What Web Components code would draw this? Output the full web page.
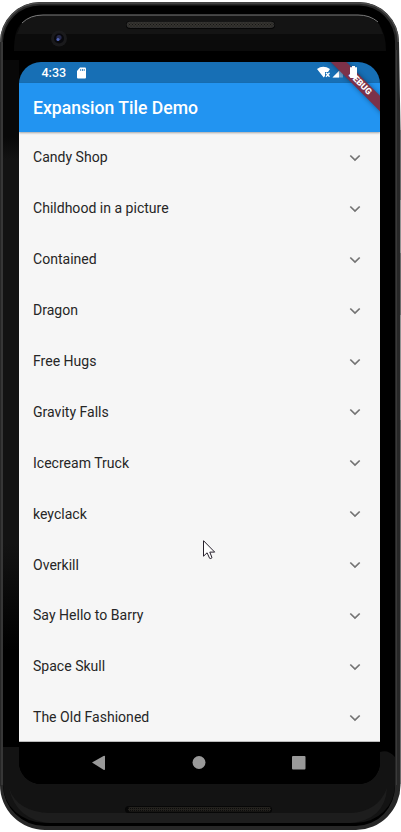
<!DOCTYPE html>
<html lang="en">
<head>
<meta charset="utf-8">
<title>Expansion Tile Demo</title>
<style>
body{margin:0;width:401px;height:832px;background:#fff;overflow:hidden;font-family:Roboto,sans-serif}
</style>
</head>
<body>
<phone-frame>
<status-bar slot="screen"></status-bar>
<app-bar slot="screen">Expansion Tile Demo</app-bar>
<tile-list slot="screen">
<expansion-tile>Candy Shop</expansion-tile>
<expansion-tile>Childhood in a picture</expansion-tile>
<expansion-tile>Contained</expansion-tile>
<expansion-tile>Dragon</expansion-tile>
<expansion-tile>Free Hugs</expansion-tile>
<expansion-tile>Gravity Falls</expansion-tile>
<expansion-tile>Icecream Truck</expansion-tile>
<expansion-tile>keyclack</expansion-tile>
<expansion-tile>Overkill</expansion-tile>
<expansion-tile>Say Hello to Barry</expansion-tile>
<expansion-tile>Space Skull</expansion-tile>
<expansion-tile>The Old Fashioned</expansion-tile>
</tile-list>
<nav-bar slot="screen"></nav-bar>
<debug-banner slot="overlay"></debug-banner>
<mouse-pointer slot="overlay"></mouse-pointer>
</phone-frame>
<script>
function define(name, html) {
  const t = document.createElement('template');
  t.innerHTML = html;
  customElements.define(name, class extends HTMLElement {
    constructor() {
      super();
      this.attachShadow({mode: 'open'}).appendChild(t.content.cloneNode(true));
    }
  });
}

define('phone-frame', `<style>
:host{display:block;position:relative;width:401px;height:832px;box-sizing:border-box;padding:62px 0 0 19px}
.body{position:absolute;left:0;top:0}
.screen{position:relative;width:361px;height:722px;border-radius:22px;overflow:hidden;display:flex;flex-direction:column;background:#000}
</style>
<svg class="body" width="401" height="832" viewBox="0 0 401 832">
<defs>
<linearGradient id="left" x1="0" y1="0" x2="0" y2="1"><stop offset="0" stop-color="#080808"/><stop offset=".13" stop-color="#080808"/><stop offset=".17" stop-color="#131313"/><stop offset=".82" stop-color="#131313"/><stop offset="1" stop-color="#000"/></linearGradient>
<pattern id="mesh" width="3" height="3" patternUnits="userSpaceOnUse"><rect width="3" height="3" fill="#35332f"/><path d="M0 0h1v1H0zM1.500 1.500h1v1h-1z" fill="#151515"/></pattern>
<pattern id="mesh2" width="2" height="2" patternUnits="userSpaceOnUse"><rect width="2" height="2" fill="#24221e"/><path d="M0 0h1v1H0z" fill="#0c0c0c"/></pattern>
</defs>
<path d="M0 42A40 40 0 0 1 40 2H359A40 40 0 0 1 399 42L400.500 130V785A45 45 0 0 1 356 830H45A45 45 0 0 1 0 785Z" fill="#272727"/>
<path d="M.7 42A39.300 39.300 0 0 1 40 3H359A39.300 39.300 0 0 1 398.300 42" fill="none" stroke="#4c4c4c" stroke-width="1.400"/>
<path d="M3 42A37 37 0 0 1 40 5.500H359A36 36 0 0 1 395 42V785A39 40 0 0 1 356 826H45A42 41 0 0 1 3 785Z" fill="#000"/>
<path d="M2 42V785" stroke="#484848"/>
<path d="M396.500 50V785" stroke="#3a3a3a"/>
<path d="M400.500 130V200M400.500 253V315M400.500 420V784" stroke="#6c6c6c"/>
<path d="M21 24Q29 15 43 15H358Q371 16 379 24Q386 34 386 51H14Q14 30 21 24Z" fill="#0b0b0b"/>
<path d="M21 24Q29 15 43 15H358Q371 16 379 24L383 34H17Z" fill="#141414"/>
<path d="M22 23Q30 15 43 15H358Q370 15 378 22" fill="none" stroke="#7c7c7c"/>
<rect x="3" y="60" width="16" height="590" fill="url(#left)"/>
<path d="M3 747H19V765Q24 784 42 784H359Q377 783 380 764V752Q388 749 395 757V785A39 38 0 0 1 356 823H45A42 38 0 0 1 3 785Z" fill="#131313"/>
<path d="M9 788Q17 812 50 813H350Q378 812 387 788Q385 820 350 823H50Q16 820 9 788Z" fill="#1d1d1d"/>
<rect x="126" y="21" width="149" height="8" rx="4" fill="#060606"/><rect x="127" y="22" width="147" height="5.500" rx="2.700" fill="url(#mesh)" stroke="#383838" stroke-width=".7"/>
<rect x="125" y="806" width="147" height="7" rx="3.500" fill="#070707"/><rect x="128" y="807" width="143" height="4.500" rx="2" fill="url(#mesh2)"/>
<circle cx="59" cy="38.500" r="8" fill="#1a1a1c"/><circle cx="59" cy="38.500" r="5" fill="#08080c"/><circle cx="59" cy="37.500" r="2.600" fill="#25284a"/><circle cx="58" cy="39.500" r="1.600" fill="#5266b8"/>
</svg>
<div class="screen"><slot name="screen"></slot></div>
<slot name="overlay"></slot>`);

define('status-bar', `<style>
:host{display:flex;flex:none;height:21px;background:#176fb5;color:#fff;align-items:center;box-sizing:border-box;padding:0 21px 0 22.500px;font:500 12.500px/21px Roboto,sans-serif}
svg{display:block}.sd{margin-left:11px}.right{margin-left:auto}
</style><span>4:33</span>
<svg class="sd" width="9" height="12" viewBox="0 0 9 12"><path d="M3 .5H8Q9 .5 9 1.500V10.500Q9 11.500 8 11.500H1Q0 11.500 0 10.500V4Z" fill="#fff"/><path d="M3.700 2v2M5.500 2v2M7.200 2v2" stroke="#176fb5" stroke-width=".8"/></svg>
<svg class="right" width="42" height="13" viewBox="0 0 42 13"><path d="M0 3Q6-1.500 13 3L11 6H8V10L6.700 11.500Z" fill="#fff"/><path d="M9 6.700l3.500 4M12.500 6.700l-3.500 4" stroke="#fff" stroke-width="1.300"/><path d="M15.500 11.500L26 .8V11.500Z" fill="#fff" opacity=".35"/><path d="M15.500 11.500L22 5V11.500Z" fill="#fff"/></svg>`);

define('app-bar', `<style>
:host{display:flex;flex:none;align-items:center;height:49px;box-sizing:border-box;padding:1px 14px 0;background:#2294f1;color:#fff;font:500 17.600px/24px Roboto,sans-serif;box-shadow:0 1px 2px #0005;position:relative;z-index:1;white-space:nowrap}
</style><slot></slot>`);

define('tile-list', `<style>:host{display:flex;flex:none;flex-direction:column;height:610px;box-sizing:border-box;background:#f6f6f6;border-bottom:1px solid #bbb}</style><slot></slot>`);

define('expansion-tile', `<style>
:host{display:flex;flex:none;height:50.900px;align-items:center;justify-content:space-between;box-sizing:border-box;padding:0 19px 0 14px;color:#262626;font:400 14.050px/20px Roboto,sans-serif}
svg{display:block;margin-top:1px}
</style><span><slot></slot></span><svg width="12" height="8" viewBox="0 0 12 8"><path d="M1.300 1.500L6 6.100L10.700 1.500" fill="none" stroke="#737373" stroke-width="1.700"/></svg>`);

define('nav-bar', `<style>:host{display:block;flex:none;height:42px;background:#000}svg{display:block}</style>
<svg width="361" height="42" viewBox="0 0 361 42" fill="#999"><path d="M73 20.500L84.500 14Q86 13.300 86 14.500V27Q86 28.500 84.500 27.700Z"/><circle cx="180" cy="20.500" r="6.500"/><rect x="273" y="14" width="13.500" height="13.500" rx="1"/></svg>`);

define('debug-banner', `<style>
:host{position:absolute;z-index:2;left:319px;top:62px;width:61px;height:65px;border-top-right-radius:22px;overflow:hidden}
.ribbon{position:absolute;left:-9.500px;top:15.500px;width:100px;height:11px;transform:rotate(45deg);background:#7c3149;box-shadow:0 0 5px #0006;color:#fff;font:900 8.800px/11px Roboto,sans-serif;text-align:center}
svg{position:absolute;left:30.500px;top:4px}
</style><div class="ribbon">DEBUG</div><svg width="7" height="12" viewBox="0 0 7 12"><path d="M2 0H5V1.300H7V11Q7 12 6 12H1Q0 12 0 11V1.300H2Z" fill="#fff"/></svg>`);

define('mouse-pointer', `<style>:host{position:absolute;z-index:3;left:203px;top:540px}svg{display:block}</style>
<svg width="13" height="20" viewBox="0 0 13 20"><path d="M.5 .7V16.200L4.100 12.800L6.600 18.300Q7.800 19 9 17.700L6.800 12.100H11.700Z" fill="#fff" stroke="#27212c" stroke-width="1"/></svg>`);
</script>
</body>
</html>
